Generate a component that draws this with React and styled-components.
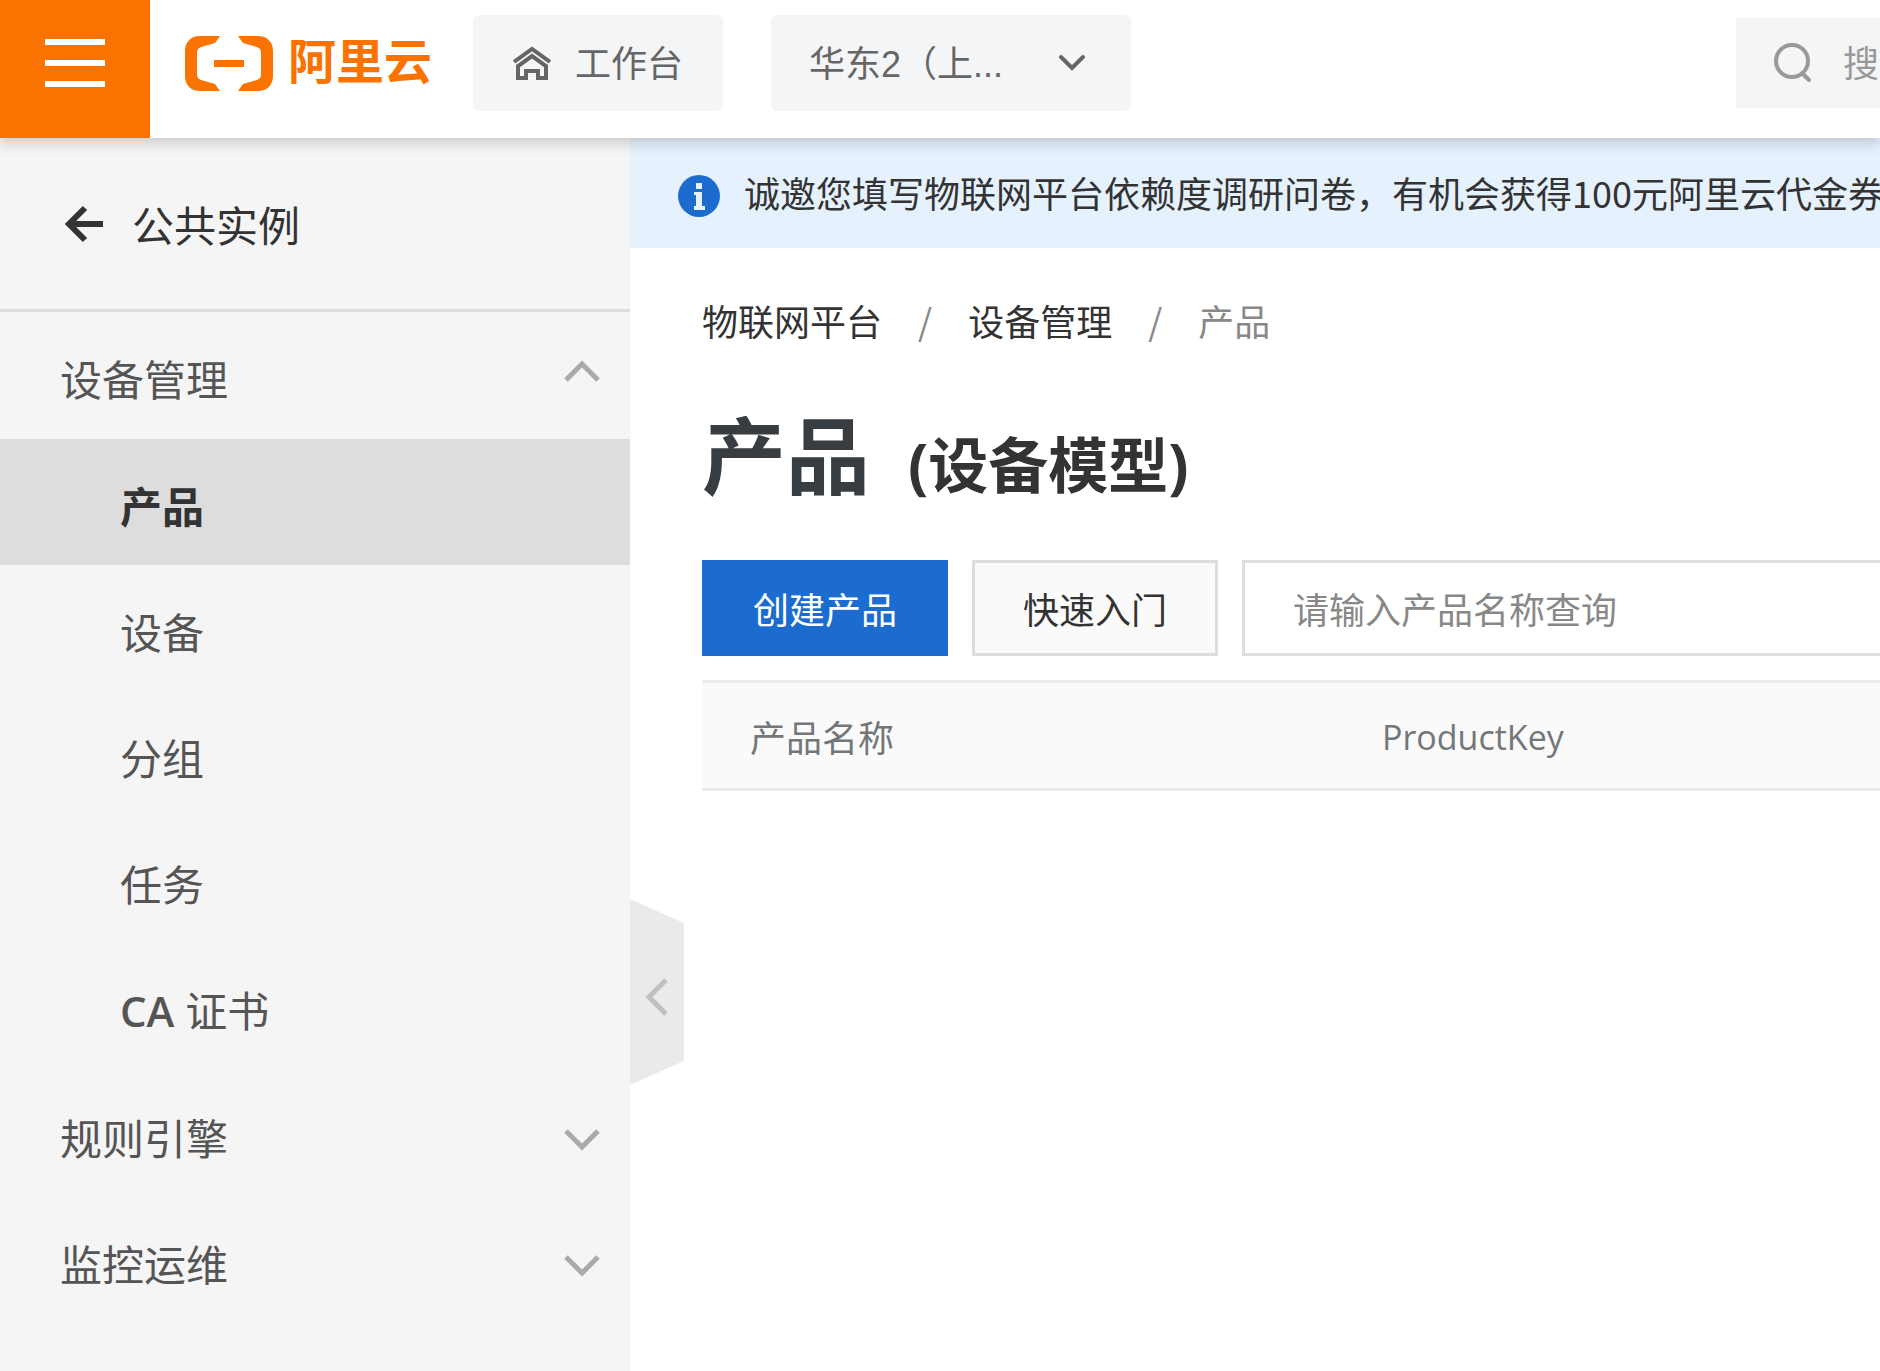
import React, { useState } from 'react';
import styled, { createGlobalStyle } from 'styled-components';

const SUB_ITEMS = ['产品', '设备', '分组', '任务'];
const MORE_GROUPS = ['规则引擎', '监控运维'];

const Chevron = () => (
  <svg width="36" height="36" viewBox="0 0 36 36" fill="none">
    <path d="M2 14 L18 30 L34 14" stroke="currentColor" strokeWidth="5" />
  </svg>
);

const Logo = () => (
  <LogoLink href="#home">
    <svg width="88" height="55" viewBox="0 0 88 55" fill="currentColor">
      <path d="M35 0 H15 C6 0 0 6 0 15 V40 C0 49 6 55 15 55 H35 L30 48 L16 44 C13 43 12 41 12 38 V17 C12 14 13 12 16 11 L30 7 Z" />
      <path d="M53 0 H73 C82 0 88 6 88 15 V40 C88 49 82 55 73 55 H53 L58 48 L72 44 C75 43 76 41 76 38 V17 C76 14 75 12 72 11 L58 7 Z" />
      <rect x="29" y="24" width="30" height="7" />
    </svg>
    <span>阿里云</span>
  </LogoLink>
);

const App = () => {
  const [active, setActive] = useState('产品');
  return (
    <Page>
      <GlobalStyle />
      <Header>
        <MenuButton aria-label="菜单">
          <i />
          <i />
          <i />
        </MenuButton>
        <Logo />
        <Workbench href="#workbench">
          <svg
            width="38"
            height="34"
            viewBox="0 0 38 34"
            fill="none"
            stroke="currentColor"
            strokeWidth="4"
          >
            <path d="M1 16 L19 3 L37 16" />
            <path d="M5 32 V20 L19 10 L33 20 V32 H25 V25 H13 V32 Z" />
          </svg>
          <span>工作台</span>
        </Workbench>
        <Region>
          <select aria-label="地域">
            <option>华东2（上...</option>
          </select>
          <svg width="28" height="18" viewBox="0 0 28 18" fill="none">
            <path
              d="M3 3 L14 14 L25 3"
              stroke="currentColor"
              strokeWidth="4"
              strokeLinecap="round"
            />
          </svg>
        </Region>
        <Search>
          <svg
            width="40"
            height="40"
            viewBox="0 0 40 40"
            fill="none"
            stroke="currentColor"
            strokeWidth="4"
          >
            <circle cx="19" cy="18" r="16" />
            <path d="M29 30 L36 37" strokeLinecap="round" />
          </svg>
          <input type="text" aria-label="搜" placeholder="搜" />
        </Search>
      </Header>

      <Body>
        <Sidebar>
          <Back href="#instances">
            <svg
              width="42"
              height="42"
              viewBox="0 0 42 42"
              fill="none"
              stroke="currentColor"
              strokeWidth="6"
            >
              <path d="M22 5 L6 21 L22 37 M6 21 H40" />
            </svg>
            公共实例
          </Back>
          <Menu>
            <GroupButton $open aria-expanded="true">
              设备管理
              <Chevron />
            </GroupButton>
            <SubMenu>
              {SUB_ITEMS.map((item) => (
                <SubItem
                  key={item}
                  href="#menu"
                  $active={item === active}
                  onClick={() => setActive(item)}
                >
                  {item}
                </SubItem>
              ))}
              <SubItem href="#menu">
                <Latin $weight={600}>CA </Latin>证书
              </SubItem>
            </SubMenu>
            {MORE_GROUPS.map((name) => (
              <GroupButton key={name} aria-expanded="false">
                {name}
                <Chevron />
              </GroupButton>
            ))}
          </Menu>
          <Collapse aria-label="收起">
            <svg width="24" height="40" viewBox="0 0 24 40" fill="none">
              <path
                d="M21 3 L4 20 L21 37"
                stroke="currentColor"
                strokeWidth="5"
              />
            </svg>
          </Collapse>
        </Sidebar>

        <Main>
          <Notice>
            <svg width="42" height="42" viewBox="0 0 42 42">
              <circle cx="21" cy="21" r="21" fill="#1c6ccf" />
              <path
                d="M18 8 H24 V14 H18 Z M16 17 H24 V31 H27 V35 H16 V31 H18 V20 H16 Z"
                fill="#e5f1fd"
              />
            </svg>
            <p>
              诚邀您填写物联网平台依赖度调研问卷，有机会获得100元阿里云代金券
            </p>
          </Notice>
          <Content>
            <Breadcrumb>
              <a href="#iot">物联网平台</a>
              <i>/</i>
              <a href="#devices">设备管理</a>
              <i>/</i>
              <span>产品</span>
            </Breadcrumb>
            <Title>
              产品<small>(设备模型)</small>
            </Title>
            <Toolbar>
              <Button $primary>创建产品</Button>
              <Button>快速入门</Button>
              <NameInput
                type="text"
                aria-label="产品名称"
                placeholder="请输入产品名称查询"
              />
            </Toolbar>
            <Table>
              <thead>
                <tr>
                  <th>产品名称</th>
                  <th>
                    <Latin $size="34px">ProductKey</Latin>
                  </th>
                </tr>
              </thead>
            </Table>
          </Content>
        </Main>
      </Body>
    </Page>
  );
};

const GlobalStyle = createGlobalStyle`
  * {
    box-sizing: border-box;
  }
  body {
    margin: 0;
    background: #fff;
    color: #333;
    font: 36px/54px 'Noto Sans CJK SC', 'Open Sans', sans-serif;
  }
  a {
    color: inherit;
    text-decoration: none;
  }
  button, input, select {
    font: inherit;
    color: inherit;
    border: 0;
    border-radius: 0;
    background: none;
    padding: 0;
    margin: 0;
    outline: none;
  }
  button {
    cursor: pointer;
  }
  svg {
    display: block;
    flex: none;
  }
`;

const Page = styled.div`
  display: flex;
  flex-direction: column;
  min-height: 100vh;
  overflow: hidden;
`;

const Header = styled.header`
  position: relative;
  z-index: 2;
  display: flex;
  height: 138px;
  background: #fff;
  color: #666;
  box-shadow: 0 6px 12px rgba(0, 0, 0, 0.16);
`;

const MenuButton = styled.button`
  display: flex;
  flex-direction: column;
  flex: none;
  gap: 15px;
  width: 150px;
  padding: 39px 45px 0;
  background: #fa7200;
  i {
    height: 6px;
    background: #fff;
  }
`;

const LogoLink = styled.a`
  display: flex;
  flex: none;
  align-items: center;
  gap: 15px;
  height: 126px;
  padding-left: 35px;
  color: #fa7200;
  font-size: 48px;
  font-weight: 700;
  span {
    padding-bottom: 10px;
  }
`;

const Workbench = styled.a`
  display: flex;
  flex: none;
  align-items: center;
  gap: 24px;
  width: 250px;
  height: 96px;
  margin: 15px 0 0 41px;
  padding-left: 40px;
  border-radius: 6px;
  background: #f4f5f7;
  span {
    padding-bottom: 4px;
  }
`;

const Region = styled.div`
  position: relative;
  flex: none;
  width: 360px;
  height: 96px;
  margin: 15px 0 0 48px;
  select {
    width: 100%;
    height: 100%;
    padding: 4px 38px 0;
    border-radius: 6px;
    background: #f4f5f7;
    appearance: none;
    font-family: 'Liberation Sans', 'Noto Sans CJK SC', sans-serif;
  }
  svg {
    position: absolute;
    right: 45px;
    top: 39px;
    pointer-events: none;
  }
`;

const Search = styled.div`
  display: flex;
  align-items: center;
  gap: 30px;
  width: 144px;
  height: 90px;
  margin: 18px 0 0 auto;
  padding-left: 37px;
  background: #f4f5f7;
  color: #999;
  input {
    flex: 1;
    min-width: 0;
    padding-bottom: 4px;
  }
  input::placeholder {
    color: #999;
  }
`;

const Body = styled.div`
  display: flex;
  flex: 1;
`;

const Sidebar = styled.aside`
  position: relative;
  flex: none;
  width: 630px;
  background: #f5f5f5;
  color: #555;
  font-size: 42px;
  line-height: 60px;
`;

const Back = styled.a`
  display: flex;
  align-items: center;
  gap: 27px;
  height: 174px;
  padding: 0 63px;
  border-bottom: 3px solid #ddd;
  color: #333;
`;

const Menu = styled.nav`
  padding-top: 1px;
`;

const GroupButton = styled.button`
  display: flex;
  align-items: center;
  justify-content: space-between;
  width: 100%;
  height: 126px;
  padding: 4px 30px 0 60px;
  svg {
    margin-bottom: 5px;
    color: #aaa;
    transform: ${({ $open }) => ($open ? 'rotate(180deg)' : 'none')};
  }
`;

const SubMenu = styled.div`
  padding-bottom: 3px;
`;

const SubItem = styled.a`
  display: block;
  height: 126px;
  padding: 36px 30px 0 120px;
  background: ${({ $active }) => ($active ? '#ddd' : 'transparent')};
  color: ${({ $active }) => ($active ? '#333' : 'inherit')};
  font-weight: ${({ $active }) => ($active ? 700 : 400)};
`;

const Latin = styled.span`
  font-family: 'Open Sans', 'Noto Sans', sans-serif;
  font-size: ${({ $size }) => $size || 'inherit'};
  font-weight: ${({ $weight }) => $weight || 400};
`;

const Collapse = styled.button`
  position: absolute;
  top: 761px;
  left: 100%;
  display: flex;
  align-items: center;
  justify-content: center;
  width: 54px;
  height: 186px;
  padding-top: 10px;
  background: #eaeaea;
  color: #c0c0c0;
  clip-path: polygon(0 0, 100% 24px, 100% 162px, 0 100%);
`;

const Main = styled.main`
  flex: 1;
  min-width: 0;
`;

const Notice = styled.div`
  display: flex;
  align-items: center;
  gap: 24px;
  height: 110px;
  padding: 6px 0 0 48px;
  background: #e5f1fd;
  overflow: hidden;
  white-space: nowrap;
  p {
    margin: 0 0 8px;
  }
`;

const Content = styled.div`
  padding: 45px 0 0 72px;
`;

const Breadcrumb = styled.nav`
  display: flex;
  gap: 36px;
  i {
    color: #888;
    font-style: normal;
  }
  span {
    color: #888;
  }
`;

const Title = styled.h1`
  display: flex;
  align-items: baseline;
  gap: 38px;
  height: 116px;
  margin: 47px 0 50px;
  color: #373d41;
  font-size: 84px;
  line-height: 116px;
  small {
    color: #333;
    font-family: 'Open Sans', 'Noto Sans CJK SC', sans-serif;
    font-size: 60px;
  }
`;

const Toolbar = styled.div`
  display: flex;
  gap: 24px;
  margin-bottom: 24px;
`;

const Button = styled.button`
  flex: none;
  width: 246px;
  height: 96px;
  border: 3px solid ${({ $primary }) => ($primary ? '#1c6ccf' : '#ddd')};
  background: ${({ $primary }) => ($primary ? '#1c6ccf' : '#fafafa')};
  color: ${({ $primary }) => ($primary ? '#fff' : '#333')};
`;

const NameInput = styled.input`
  flex: 1;
  min-width: 0;
  height: 96px;
  padding-left: 48px;
  border: 3px solid #ddd;
  border-right: 0;
  &::placeholder {
    color: #888;
  }
`;

const Table = styled.table`
  width: 100%;
  table-layout: fixed;
  border-collapse: separate;
  border-spacing: 0;
  th {
    height: 111px;
    padding: 0 0 0 48px;
    border: solid #ebebeb;
    border-width: 3px 0;
    background: #fafafa;
    color: #73777a;
    font-weight: 400;
    text-align: left;
  }
  th:first-child {
    width: 632px;
  }
`;

export default App;
